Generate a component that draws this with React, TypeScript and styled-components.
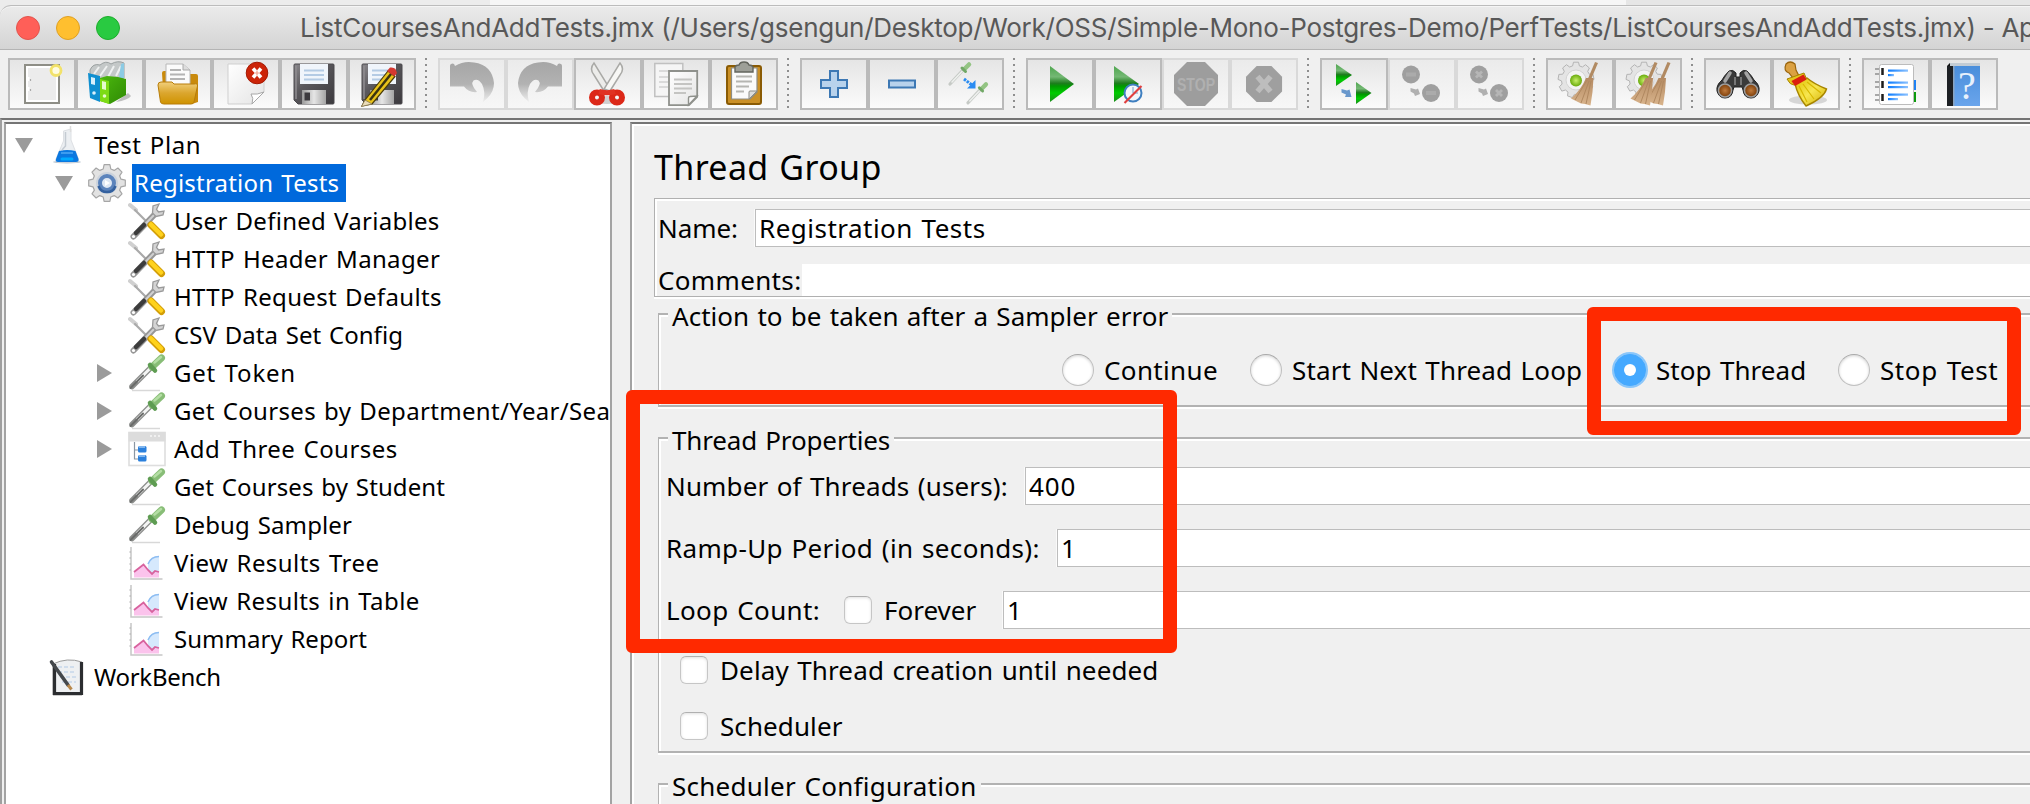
import React from 'react';
import styled, { createGlobalStyle, css } from 'styled-components';

const GlobalStyle = createGlobalStyle`
  * { box-sizing: border-box; }
  body { margin: 0; background: #f0f0f0; overflow: hidden; }
`;

/* ---------- window chrome ---------- */

const Window = styled.div`
  position: relative;
  display: flex;
  flex-direction: column;
  width: 2030px;
  height: 804px;
  overflow: hidden;
  background: #f0f0f0;
  color: #000;
  font-family: 'Noto Sans', 'Open Sans', sans-serif;
  font-size: 26px;
  word-spacing: 1.5px;
  white-space: nowrap;
`;

const TitleBar = styled.div`
  display: flex;
  flex: none;
  align-items: center;
  height: 45px;
  padding-left: 16px;
  border-top: 1px solid #bcbcbc;
  border-bottom: 1px solid #b4b4b4;
  border-top-left-radius: 11px;
  background: linear-gradient(#ebebeb, #d4d4d4);
  box-shadow: inset 0 1px 0 #f5f5f5;
`;

const Backdrop = styled.div`
  flex: none;
  padding-top: 5px;
  background: linear-gradient(90deg, #ececec 490px, #f6f6f6 490px, #f6f6f6 1626px, #e6e6e6 1626px);
`;

const Light = styled.span<{ $fill: string; $edge: string }>`
  flex: none;
  width: 24px;
  height: 24px;
  margin-right: 16px;
  border: 1px solid ${(p) => p.$edge};
  border-radius: 50%;
  background: ${(p) => p.$fill};
`;

const WindowTitle = styled.span`
  flex: none;
  margin-left: 164px;
  font-family: Inter, sans-serif;
  font-size: 26px;
  letter-spacing: -0.26px;
  word-spacing: 0;
  color: #585858;
  line-height: 40px;
`;

/* ---------- toolbar ---------- */

const Toolbar = styled.div`
  display: flex;
  flex: none;
  height: 68px;
  padding: 8px;
`;

const ToolButton = styled.div<{ $disabled?: boolean }>`
  display: flex;
  align-items: center;
  justify-content: center;
  width: 68px;
  height: 52px;
  border: 2px solid ${(p) => (p.$disabled ? '#d9d9d9' : '#bababa')};
  background: linear-gradient(#e5e5e5, #fbfbfb);
  ${(p) =>
    p.$disabled &&
    css`
      background: linear-gradient(#ebebeb, #f7f7f7);
    `}
`;

const Separator = styled.div`
  width: 2px;
  height: 50px;
  margin: 0 11px 0 9px;
  background: repeating-linear-gradient(#8e8e8e 0 2px, transparent 2px 6px);
`;

/* ---------- split panes ---------- */

const Split = styled.div`
  display: flex;
  flex: 1;
  min-height: 0;
  padding: 2px 0 0 2px;
  border-top: 2px solid #747474;
  border-left: 2px solid #9f9f9f;
`;

const TreePane = styled.div`
  flex: none;
  width: 608px;
  padding-top: 2px;
  overflow: hidden;
  border: 2px solid #a3a3a3;
  border-top-color: #757575;
  border-bottom: 0;
  background: #fff;
`;

const Divider = styled.div`
  flex: none;
  width: 18px;
`;

const FormPane = styled.div`
  flex: 1;
  min-width: 0;
  overflow: hidden;
  padding: 21px 0 0 22px;
  border-left: 2px solid #a3a3a3;
  border-top: 2px solid #757575;
  box-shadow: inset 2px 2px 0 #fff;
`;

/* ---------- tree ---------- */

const TreeRow = styled.div<{ $level: number }>`
  display: flex;
  align-items: center;
  height: 38px;
  padding-left: ${(p) => 9 + p.$level * 40}px;
  font-size: 24px;
`;

const Toggle = styled.span`
  display: flex;
  flex: none;
  justify-content: center;
  width: 18px;
  margin-right: 15px;
`;

const TreeLabel = styled.span<{ $selected?: boolean; $track: number }>`
  margin-left: 6px;
  padding: 0 ${(p) => (p.$selected ? 7 : 0)}px 0 2px;
  line-height: 38px;
  letter-spacing: ${(p) => p.$track}px;
  ${(p) =>
    p.$selected &&
    css`
      background: #0069dc;
      color: #fff;
    `}
`;

/* ---------- form ---------- */

const Heading = styled.h1<{ $track: number }>`
  margin: 0;
  font-size: 34px;
  font-weight: 400;
  line-height: 44px;
  letter-spacing: ${(p) => p.$track}px;
`;

const NamePanel = styled.div`
  display: flex;
  flex-direction: column;
  gap: 17px;
  margin-top: 9px;
  margin-right: -12px;
  padding: 10px 0 0 3px;
  border: 1px solid #b0b0b0;
  box-shadow: inset 2px 2px 0 #fff, 0 2px 0 #fff;
`;

const Group = styled.section<{ $gap: number; $bottom: number }>`
  margin: ${(p) => p.$gap}px -12px 0 4px;
  padding-bottom: ${(p) => p.$bottom}px;
  border: solid #b2b2b2;
  border-width: 2px 1px 2px 1px;
  box-shadow: inset 2px 2px 0 #fff, 0 2px 0 #fff;
`;

const Legend = styled.h2<{ $track: number }>`
  width: max-content;
  margin: -15px 0 0 9px;
  padding: 0 4px 0 4px;
  background: #f0f0f0;
  font-size: 26px;
  font-weight: 400;
  line-height: 32px;
  letter-spacing: ${(p) => p.$track}px;
`;

const Row = styled.div<{ $height?: number; $top?: number; $indent?: number }>`
  display: flex;
  align-items: center;
  height: ${(p) => p.$height ?? 38}px;
  margin-top: ${(p) => p.$top ?? 0}px;
  padding-left: ${(p) => p.$indent ?? 0}px;
`;

const Label = styled.label<{ $width?: number; $track: number; $inset?: number }>`
  flex: none;
  width: ${(p) => (p.$width ? `${p.$width}px` : 'auto')};
  padding-left: ${(p) => p.$inset ?? 0}px;
  line-height: 38px;
  letter-spacing: ${(p) => p.$track}px;
`;

const Field = styled.div<{ $bare?: boolean; $track?: number }>`
  flex: 1;
  align-self: stretch;
  padding-left: 3px;
  border: ${(p) => (p.$bare ? '0' : '1px solid #bdbdbd')};
  background: #fff;
  box-shadow: ${(p) => (p.$bare ? 'none' : '-1px 0 0 #fafafa')};
  line-height: 37px;
  letter-spacing: ${(p) => p.$track ?? 0}px;
`;

const Option = styled.div<{ $width: number }>`
  display: flex;
  flex: none;
  align-items: center;
  gap: 10px;
  width: ${(p) => p.$width}px;
`;

const Radio = styled.span<{ $checked?: boolean }>`
  display: flex;
  flex: none;
  align-items: center;
  justify-content: center;
  width: 32px;
  height: 32px;
  border: 1px solid #c0c0c0;
  border-top-color: #a9a9a9;
  border-radius: 50%;
  background: #fff;
  box-shadow: inset 0 1px 3px rgba(0, 0, 0, 0.18);
  ${(p) =>
    p.$checked &&
    css`
      border-color: #45a9ff;
      background: #45a9ff;
      box-shadow: 0 0 0 2px #8ac6fa;
      &::after {
        content: '';
        width: 12px;
        height: 12px;
        border-radius: 50%;
        background: #fff;
      }
    `}
`;

const CheckBox = styled.span`
  flex: none;
  width: 28px;
  height: 28px;
  border: 1px solid #c6c6c6;
  border-top-color: #b0b0b0;
  border-radius: 6px;
  background: #fff;
  box-shadow: inset 0 1px 3px rgba(0, 0, 0, 0.12);
`;

const Callout = styled.div<{ $x: number; $y: number; $w: number; $h: number }>`
  position: absolute;
  left: ${(p) => p.$x}px;
  top: ${(p) => p.$y}px;
  width: ${(p) => p.$w}px;
  height: ${(p) => p.$h}px;
  border: 14px solid #ff2900;
  border-radius: 6px;
`;

/* ---------- icon drawing ---------- */

const gearPath = (cx: number, cy: number, outer: number, inner: number, teeth: number) => {
  const pts: string[] = [];
  const step = (Math.PI * 2) / teeth;
  for (let i = 0; i < teeth; i += 1) {
    const a = i * step - Math.PI / 2;
    [
      [-0.34, inner],
      [-0.2, outer],
      [0.2, outer],
      [0.34, inner],
    ].forEach(([o, r]) => {
      pts.push(`${(cx + Math.cos(a + o * step) * r).toFixed(1)} ${(cy + Math.sin(a + o * step) * r).toFixed(1)}`);
    });
  }
  return `M${pts.join('L')}Z`;
};

const OCTAGON = 'M13 0H31L44 13V31L31 44H13L0 31V13Z';

const Gradients = () => (
  <svg width="0" height="0" style={{ display: 'block' }}>
    <defs>
      <linearGradient id="green" x1="0" y1="0" x2="0" y2="1">
        <stop offset="0" stopColor="#4fa64f" />
        <stop offset=".3" stopColor="#74b874" />
        <stop offset=".48" stopColor="#1e7c1e" />
        <stop offset=".56" stopColor="#009a00" />
        <stop offset=".75" stopColor="#00cc00" />
        <stop offset="1" stopColor="#1d8c1d" />
      </linearGradient>
      <linearGradient id="folder" x1="0" y1="0" x2="0" y2="1">
        <stop offset="0" stopColor="#f1cf7c" />
        <stop offset=".5" stopColor="#dba62e" />
        <stop offset="1" stopColor="#cf9300" />
      </linearGradient>
      <linearGradient id="metal" x1="0" y1="0" x2="1" y2="1">
        <stop offset="0" stopColor="#8a888c" />
        <stop offset=".4" stopColor="#5a585c" />
        <stop offset="1" stopColor="#3c3a3e" />
      </linearGradient>
      <linearGradient id="shutter" x1="0" y1="0" x2="1" y2="0">
        <stop offset="0" stopColor="#9a9a9a" />
        <stop offset=".5" stopColor="#e6e6e6" />
        <stop offset="1" stopColor="#a4a4a4" />
      </linearGradient>
      <linearGradient id="paper" x1="0" y1="0" x2="1" y2="1">
        <stop offset="0" stopColor="#ffffff" />
        <stop offset="1" stopColor="#e4e4e4" />
      </linearGradient>
      <linearGradient id="undo" x1="0" y1="0" x2="0" y2="1">
        <stop offset="0" stopColor="#a6a6a6" />
        <stop offset=".55" stopColor="#b2b2b2" />
        <stop offset="1" stopColor="#eeeeee" />
      </linearGradient>
      <linearGradient id="book" x1="0" y1="0" x2="0" y2="1">
        <stop offset="0" stopColor="#4a8edb" />
        <stop offset="1" stopColor="#6aa5ec" />
      </linearGradient>
      <linearGradient id="bluebar" x1="0" y1="0" x2="1" y2="0">
        <stop offset="0" stopColor="#0a7bff" />
        <stop offset="1" stopColor="#8cc2ff" />
      </linearGradient>
      <radialGradient id="ball">
        <stop offset="0" stopColor="#c8f06a" />
        <stop offset="1" stopColor="#69ab0c" />
      </radialGradient>
      <radialGradient id="lens">
        <stop offset="0" stopColor="#c07a3c" />
        <stop offset="1" stopColor="#7a3c08" />
      </radialGradient>
      <linearGradient id="straw" x1="0" y1="0" x2="0" y2="1">
        <stop offset="0" stopColor="#b48a62" />
        <stop offset="1" stopColor="#d9b48c" />
      </linearGradient>
      <linearGradient id="brush" x1="0" y1="0" x2="1" y2="1">
        <stop offset="0" stopColor="#e0c000" />
        <stop offset=".5" stopColor="#f7e650" />
        <stop offset="1" stopColor="#d0ac00" />
      </linearGradient>
      <linearGradient id="leaf" x1="0" y1="0" x2="1" y2="1">
        <stop offset="0" stopColor="#4cb80e" />
        <stop offset="1" stopColor="#2f8a04" />
      </linearGradient>
    </defs>
  </svg>
);

const Floppy = () => (
  <g>
    <path d="M3 2H41Q42 2 42 3V41Q42 42 41 42H6L2 38V3Q2 2 3 2Z" fill="url(#metal)" stroke="#4a484c" strokeWidth="1" />
    <path d="M4 4V37" stroke="#8f8d91" strokeWidth="1.5" />
    <rect x="8" y="2" width="28" height="20" fill="#f0f5fb" />
    <path d="M12 8.5H32M12 13H32M12 17.5H32" stroke="#b4cbe4" strokeWidth="2" />
    <rect x="10" y="28" width="24" height="14" fill="url(#shutter)" />
    <rect x="12.500" y="30.500" width="5.500" height="8" fill="#3c3a3e" />
  </g>
);

const Pipette = () => (
  <g>
    <path d="M4 32.500L22 14.500" stroke="#8b8d8b" strokeWidth="5.500" strokeLinecap="round" />
    <path d="M9 27.500L22 14.500" stroke="#f4f5f4" strokeWidth="3" />
    <path d="M2.500 34L15 21.500" stroke="#6a6c6a" strokeWidth="2" strokeLinecap="round" />
    <path d="M24 13L33.500 4" stroke="#88bd77" strokeWidth="7" strokeLinecap="round" />
    <path d="M26.500 8.500L33 3" stroke="#b4dea4" strokeWidth="2.500" strokeLinecap="round" />
    <path d="M22 11L27 16.500" stroke="#5e9c52" strokeWidth="4.500" strokeLinecap="round" />
  </g>
);

const SmallPipette = () => (
  <g strokeLinecap="round">
    <path d="M2 22L15 8" stroke="#c6cac6" strokeWidth="3.200" />
    <path d="M4 20L14 9.500" stroke="#eef0ee" strokeWidth="1.500" />
    <path d="M16.500 7L21 2.500" stroke="#93c483" strokeWidth="4.500" />
    <path d="M14 6L17.500 9.500" stroke="#71a866" strokeWidth="3" />
  </g>
);

const CrossedTools = () => (
  <g strokeLinecap="round">
    <path d="M2 3L8 8" stroke="#d0d0d0" strokeWidth="4" />
    <path d="M7 8L20 21" stroke="#aaaaaa" strokeWidth="2.200" />
    <path d="M5.500 34.500L28 11" stroke="#969696" strokeWidth="6" />
    <path d="M14 25.500L27 12" stroke="#d0d0d0" strokeWidth="2" />
    <path d="M8 31L16 23" stroke="#3c3c3c" strokeWidth="4.500" />
    <circle cx="5.500" cy="34.500" r="1.600" fill="#fff" />
    <path d="M25 4L24.500 11L28 14.500L35 13L36 9L30.500 10L28.500 7.500L31 2Z" fill="#d4d4d4" stroke="#9a9a9a" strokeWidth="1.300" />
    <path d="M23 23L33.500 33.500" stroke="#d39e08" strokeWidth="7" />
    <path d="M23 22.500L33 32.500" stroke="#ffd21c" strokeWidth="4.500" />
  </g>
);

const Straw = ({ dx = 0 }: { dx?: number }) => (
  <g transform={`translate(${dx} 0)`}>
    <path d="M38.500 0.500L31.500 17" stroke="#b18a62" strokeWidth="3.200" />
    <path d="M28 16H35.500Q35 30 32.500 43.500L27 42L23 41.500L18 39L13 36.500Q23 28 28 16Z" fill="url(#straw)" />
    <path d="M29 18L17 38M31 19L23 41M33 19L28 42" stroke="#b08860" strokeWidth="1" fill="none" />
  </g>
);

const PaleGear = () => (
  <g>
    <path d={gearPath(18, 18, 18, 14.5, 9)} fill="#e4e4e4" stroke="#b4b4b4" strokeWidth="1" />
    <circle cx="18" cy="18" r="10" fill="#f3f3f3" stroke="#d4d4d4" />
    <circle cx="18" cy="18.500" r="6" fill="url(#ball)" />
  </g>
);

const Hook = () => (
  <path
    d="M1 2Q4 .500 5 4Q14 -1.500 24 .500Q42 3 44 21Q44 30 37 36.500L33 40Q36 30 32 22Q28 16 23.500 18.500Q20 22 27 30Q19 31 14 24.500H0V4Q0 2.500 1 2Z"
    fill="url(#undo)"
  />
);

const icons: Record<string, React.ReactNode> = {
  new: (
    <g>
      <rect x="5" y="3" width="34" height="38" fill="#fff" stroke="#8e8e86" strokeWidth="2" />
      <rect x="8" y="6" width="28" height="32" fill="#ececec" />
      <path d="M8 15V19M8 25V29" stroke="#fff" strokeWidth="3" />
      <path d="M10.500 17V19M10.500 27V29" stroke="#aaa" strokeWidth="1.200" />
      <circle cx="36" cy="8.500" r="5" fill="#fffce0" stroke="#f2e26a" strokeWidth="2.800" />
    </g>
  ),
  templates: (
    <g>
      <path d="M40 31L43 34Q40 38 28 40Z" fill="#999" opacity=".6" />
      <path d="M2 8Q5 1 12 3Q18 -2 23 2Q30 -2 36 1V16L14 20L2 14Z" fill="#c4c8c8" stroke="#9aa0a0" strokeWidth="1" />
      <path d="M6 12L11 5M12 14L19 4M20 15L26 4M28 14L33 4" stroke="#eef0f0" strokeWidth="2" />
      <path d="M33 2L36 1V16L31 16Z" fill="#8ccbe4" />
      <path d="M0 11L12 14V40L2 36Z" fill="#0f8fd0" />
      <path d="M3 15L7 16V23L3 22Z" fill="#d8f0fb" />
      <circle cx="6" cy="31" r="1.800" fill="#d8f0fb" />
      <path d="M12 16L19 14L30 15L38 17V33L22 42L12 39Z" fill="url(#leaf)" />
      <path d="M12 17L21 19V42L12 39Z" fill="#7ddb15" />
      <path d="M14 19L18 20V28L14 27Z" fill="#e6fbcd" />
      <circle cx="16.500" cy="34" r="1.800" fill="#e6fbcd" />
    </g>
  ),
  open: (
    <g>
      <path d="M6 11Q6 9 8 9H18L20 12H40Q42 12 42 14V40L36 42H8Z" fill="#c98a0c" />
      <path d="M10 2H27L34 8V24H10Z" fill="#fbfbfb" stroke="#b8b8b8" />
      <path d="M27 2V8H34" fill="#ddd" stroke="#aaa" />
      <path d="M14 8H25M14 12.500H29M14 17H29" stroke="#b4b4b4" strokeWidth="1.800" />
      <path d="M2 23Q2 20 5 20H16L18 22H38Q42 21 41.500 24L38 40Q37.500 42 35 42H8Q5 42 4.500 40Z" fill="url(#folder)" stroke="#b87d0a" />
    </g>
  ),
  close: (
    <g>
      <path d="M4 2H40V30L28 42H4Z" fill="url(#paper)" stroke="#cfcfcf" />
      <path d="M40 30L28 42Q30 36 27 32Q33 33 40 30Z" fill="#fff" stroke="#a8a8a8" />
      <circle cx="33" cy="11" r="10.800" fill="#cc2408" stroke="#a51a04" />
      <path d="M29 6.500L37 15.500M37 6.500L29 15.500" stroke="#fff" strokeWidth="3.600" />
      <path d="M33 8.500V13.500M30.500 11H35.500" stroke="#f2a08c" strokeWidth="1.200" />
    </g>
  ),
  save: <Floppy />,
  saveAs: (
    <g>
      <Floppy />
      <path d="M5 38L28 9L35 14.500L12 42L2 44Z" fill="#e9c21a" stroke="#4a3c08" strokeWidth="1.200" />
      <path d="M10 38L31 12" stroke="#3c3410" strokeWidth="2.500" />
      <path d="M5 38L12 42L1.500 44.500Z" fill="#eadcb8" stroke="#8c7a50" strokeWidth=".8" />
      <path d="M27 9L30 5.500Q34 5 35.500 7L37 11L34.500 14.500Z" fill="#d43830" />
    </g>
  ),
  undo: <Hook />,
  redo: (
    <g transform="translate(44 0) scale(-1 1)">
      <Hook />
    </g>
  ),
  cut: (
    <g fill="none">
      <ellipse cx="21" cy="38" rx="10" ry="4" fill="#cfcfcf" />
      <path d="M8 1Q3 7 8 13L18 29L24 27Z" fill="#ececea" stroke="#a9a9a6" strokeWidth="1.500" />
      <path d="M34 1Q39 7 34 13L24 29L18 27Z" fill="#f7f7f5" stroke="#a9a9a6" strokeWidth="1.500" />
      <circle cx="11" cy="35.500" r="5" stroke="#dc2818" strokeWidth="6" />
      <circle cx="31" cy="35.500" r="5" stroke="#dc2818" strokeWidth="6" />
      <path d="M13 29.500Q21 32 29 29.500" stroke="#e03222" strokeWidth="5" />
    </g>
  ),
  copy: (
    <g>
      <rect x=".8" y="1.500" width="28" height="33" fill="#f5f5f5" stroke="#c0c0c0" strokeWidth="1.500" />
      <path d="M5 9H24M5 15H14M5 20H14M5 25H14" stroke="#dadada" strokeWidth="1.800" />
      <path d="M15 9H43.200V35L35 43.200H15Z" fill="url(#paper)" stroke="#8f918c" strokeWidth="1.800" />
      <path d="M43 34L34.500 43V36Q34.500 34.500 36 34.500Z" fill="#fafafa" stroke="#8f918c" strokeWidth="1.400" />
      <path d="M20 17.500H38M20 22H38M20 26.500H38M20 31H32" stroke="#c4c4c2" strokeWidth="1.800" />
    </g>
  ),
  paste: (
    <g>
      <rect x="5" y="4" width="34" height="38" rx="2" fill="#cb9026" stroke="#8a5b04" strokeWidth="2" />
      <path d="M9.500 6H35V30L28 37H9.500Z" fill="#fafafa" stroke="#8d8d86" strokeWidth="1.200" />
      <path d="M35 29L27 37V30Q27 29 28 29Z" fill="#ddd" stroke="#8d8d86" />
      <path d="M14 14.500H30M14 19.500H30M14 24.500H27M14 29.500H22" stroke="#b6b6b2" strokeWidth="1.800" />
      <path d="M13 10V5Q14 3 17 3Q18 0 22 0T27 3Q30 3 31 5V10Z" fill="#9d9f98" stroke="#63655e" strokeWidth="1.400" />
    </g>
  ),
  expand: <path d="M18 9H26V18H35V26H26V35H18V26H9V18H18Z" fill="#b8d2ec" stroke="#3d78b4" strokeWidth="2" />,
  collapse: <path d="M9 18.500H35V25.500H9Z" fill="#b8d2ec" stroke="#3d78b4" strokeWidth="2" />,
  toggle: (
    <g>
      <SmallPipette />
      <g transform="translate(18 20) scale(.95)">
        <SmallPipette />
      </g>
      <path d="M16 17L24 23" stroke="#2a8cf2" strokeWidth="3" strokeDasharray="2.500 1" />
      <path d="M19 26.500H27.500V18Z" fill="#2a8cf2" />
    </g>
  ),
  play: <path d="M12 4L36 22L12 40Z" fill="url(#green)" />,
  playNoTimers: (
    <g>
      <path d="M8 4L33 22L8 40Z" fill="url(#green)" />
      <circle cx="27" cy="31" r="8.500" fill="#f2f6fa" stroke="#3f7fc0" strokeWidth="2" />
      <path d="M27 31V25M27 31H32" stroke="#9dbad8" strokeWidth="1.500" />
      <path d="M18.500 41L35.500 24" stroke="#e04040" strokeWidth="2.200" />
    </g>
  ),
  stop: (
    <g>
      <path d={OCTAGON} fill="#9d9d9d" />
      <text x="22" y="28.500" textAnchor="middle" fontFamily="Liberation Sans, sans-serif" fontWeight="700" fontSize="18" textLength="38" lengthAdjust="spacingAndGlyphs" fill="#b0b0b0">
        STOP
      </text>
    </g>
  ),
  shutdown: (
    <g>
      <path d={OCTAGON} fill="#9f9f9f" transform="translate(4 4) scale(.82)" />
      <path d="M15.500 14.500L28.500 29.500M28.500 14.500L15.500 29.500" stroke="#bdbdbd" strokeWidth="5.500" />
    </g>
  ),
  remoteStart: (
    <g>
      <path d="M4 2L20 13L4 24Z" fill="url(#green)" />
      <path d="M24 20L39.500 31L24 42Z" fill="url(#green)" />
      <path d="M9.500 27L15 28.500L17.500 27.500L19.500 35L13 35L14 32.500L9.500 30.500Z" fill="#6a98cc" />
    </g>
  ),
  remoteStop: (
    <g>
      <circle cx="11" cy="12.500" r="9" fill="#9f9f9f" />
      <circle cx="31" cy="31" r="9" fill="#9f9f9f" />
      <path d="M6 12.500H16M26 31H36" stroke="#ababab" strokeWidth="4" />
      <path d="M10.500 26L16 27.500L18 26.500L20 32L15 34L14 31.500L10.500 29.500Z" fill="#b0b0b0" />
    </g>
  ),
  remoteShutdown: (
    <g>
      <circle cx="11" cy="12.500" r="9" fill="#9f9f9f" />
      <circle cx="31" cy="31" r="9" fill="#9f9f9f" />
      <path d="M8 9.500L14 15.500M14 9.500L8 15.500M28 28L34 34M34 28L28 34" stroke="#b6b6b6" strokeWidth="2.800" />
      <path d="M10.500 26L16 27.500L18 26.500L20 32L15 34L14 31.500L10.500 29.500Z" fill="#b0b0b0" />
    </g>
  ),
  clear: (
    <g>
      <PaleGear />
      <Straw />
    </g>
  ),
  clearAll: (
    <g>
      <PaleGear />
      <Straw dx={4.5} />
      <Straw dx={-8.5} />
    </g>
  ),
  search: (
    <g>
      <path d="M13 9Q17 7 20 11V15H24V11Q27 7 31 9Q36 14 38 18Q44 23 43 29Q41 36 35 36Q28 36 27 28L26 25H18L17 28Q16 36 9 36Q3 36 1 29Q0 23 6 18Q8 14 13 9Z" fill="#3a3a3a" stroke="#222" />
      <path d="M9 19L14 11M35 19L30 11" stroke="#a4a4a4" strokeWidth="3.500" strokeLinecap="round" />
      <path d="M19 15V23M25 15V23" stroke="#8a8a8a" strokeWidth="1.500" />
      <circle cx="9" cy="28.500" r="6.500" fill="url(#lens)" stroke="#9d9d9d" strokeWidth="1.500" />
      <circle cx="35" cy="28.500" r="6.500" fill="url(#lens)" stroke="#9d9d9d" strokeWidth="1.500" />
    </g>
  ),
  broom: (
    <g>
      <ellipse cx="24" cy="38" rx="19" ry="4.500" fill="#d6d6d6" />
      <path d="M2 2Q6 -2 11 2L12 8L15 14L9 16L5 11Q-1 9 2 2Z" fill="#dba142" stroke="#9a640c" strokeWidth="1.200" />
      <path d="M3 17L20 11L23 18L10 23Q6 23 3 17Z" fill="#e4c51c" stroke="#a88600" />
      <path d="M11 22L23 16Q30 22 42.500 27Q40 36 22 44Q14 34 11 22Z" fill="url(#brush)" stroke="#a88600" strokeWidth="1.400" />
      <path d="M15 24L23 40M19 22L30 37M23 20L37 31" stroke="#d8b800" strokeWidth="1.200" />
      <path d="M7.500 19L19.500 12.500L22.500 17.500L11 24Z" fill="#dc1f10" />
    </g>
  ),
  functions: (
    <g>
      <rect x="38" y="18" width="4" height="10" fill="#1f82f4" />
      <rect x="38" y="30" width="4" height="10" fill="#0c9a0c" />
      <rect x="5.500" y="2.500" width="34" height="40" rx="2" fill="#fff" stroke="#bcbcbc" />
      <path d="M8.500 6V13M8.500 19V26M8.500 32V39" stroke="#1c1c1c" strokeWidth="2.500" />
      <path d="M1 7H5M1 12H5M1 20H5M1 25H5M1 33H5M1 38H5" stroke="#8f8f8f" strokeWidth="1.500" />
      <g fill="url(#bluebar)">
        <rect x="14" y="7.500" width="20" height="2.200" />
        <rect x="14" y="12" width="6" height="2.200" />
        <rect x="14" y="19.500" width="20" height="2.200" />
        <rect x="14" y="24" width="20" height="2.200" />
        <rect x="14" y="31.500" width="20" height="2.200" />
        <rect x="14" y="36" width="10" height="2.200" />
      </g>
    </g>
  ),
  help: (
    <g>
      <path d="M7 1H38V5H5Z" fill="#c3ccd4" />
      <path d="M5 4L8 1V44H5Z" fill="#111" />
      <rect x="5" y="4" width="33" height="40" fill="url(#book)" />
      <rect x="5" y="4" width="7" height="40" fill="#1d2024" />
      <rect x="11" y="4" width="1.500" height="40" fill="#8aa4c0" />
      <text x="25" y="37" textAnchor="middle" fontFamily="Liberation Serif, serif" fontSize="40" fill="#e8f1fc">
        ?
      </text>
    </g>
  ),
};

const treeIcons: Record<string, React.ReactNode> = {
  flask: (
    <g>
      <ellipse cx="19" cy="36" rx="14" ry="1.500" fill="#b8c4d0" />
      <path d="M15.500 5L23 3V14L30.500 33Q31 36 28 36H10Q7 36 8 33L15.500 15Z" fill="#eceff2" stroke="#dde0e4" strokeWidth="1" />
      <path d="M11 25Q19 23 27.500 25L30.500 33Q31 36 28 36H10Q7 36 8 33Z" fill="#0b78e0" />
      <path d="M14 33H24" stroke="#0af" strokeWidth="3" strokeLinecap="round" />
      <path d="M13 27H25" stroke="#3c9cf0" strokeWidth="2" />
      <path d="M17.500 6V20L14 24" fill="none" stroke="#c4cbd2" strokeWidth="1.500" />
      <path d="M22.500 0V6" stroke="#ddd" strokeWidth="1.500" />
    </g>
  ),
  gear: (
    <g>
      <path d={gearPath(19, 19, 18.5, 14.5, 8)} fill="#e2e2e2" stroke="#a6a6a6" strokeWidth="1.200" strokeLinejoin="round" />
      <circle cx="19" cy="19" r="11" fill="#ccd3dc" />
      <circle cx="19" cy="19" r="7" fill="#dfe8f3" stroke="#5c84bc" strokeWidth="4" />
      <path d="M10.500 22A9 9 0 0 0 27.500 22" fill="none" stroke="#34619f" strokeWidth="2.500" />
      <path d="M17 16L22 19L17 22Z" fill="#fff" />
    </g>
  ),
  tools: <CrossedTools />,
  pipette: (
    <g>
      <path d="M4 36.500H32" stroke="#d8d8d8" strokeWidth="1.500" />
      <Pipette />
    </g>
  ),
  controller: (
    <g>
      <rect x="1" y="2.500" width="36" height="33" fill="#fff" stroke="#dedede" strokeWidth="1.600" />
      <rect x=".5" y="2" width="37" height="9.500" fill="#dcdcdc" />
      <path d="M22 6H34" stroke="#f0f0f0" strokeWidth="2" strokeDasharray="2 2" />
      <path d="M6.500 12V29H10M6.500 20H10" fill="none" stroke="#8a96a2" strokeWidth="1.200" />
      <rect x="10" y="16" width="8.500" height="6.500" rx="1.500" fill="#2b80dc" />
      <rect x="10" y="25" width="8.500" height="6.500" rx="1.500" fill="#2b80dc" />
      <path d="M11 17H17M11 26H17" stroke="#9cc6f4" strokeWidth="1.500" />
    </g>
  ),
  chart: (
    <g fill="none">
      <path d="M20 30V19Q23 12 31 12V32H20Z" fill="#d6e9fd" />
      <path d="M20 20Q23 12.500 31 12.500" stroke="#8dbdf2" strokeWidth="1.500" />
      <path d="M6 28L15.500 20.500L20 26L24 30L31 27V33.500H6Z" fill="#fbc3ec" />
      <path d="M6 28L15.500 20.500L20 26L24 30L27 27L31 28" stroke="#d8629e" strokeWidth="1.800" />
      <path d="M3 3V35H34.500" stroke="#c6c6c6" strokeWidth="1.500" />
      <path d="M1.500 8H3M1.500 14H3M1.500 20H3M1.500 26H3" stroke="#bbb" strokeWidth="1.500" />
    </g>
  ),
  notebook: (
    <g>
      <path d="M5 6Q19 -1 34 4V37H5Z" fill="#eef0f2" stroke="#9a9a9a" />
      <path d="M6.500 6V35.500H33.500V4" fill="none" stroke="#2b2d30" strokeWidth="3.200" />
      <path d="M10 9H28M10 14H28M12 19H28M14 24H28" stroke="#c6d6ea" strokeWidth="1.400" strokeDasharray="4 2" />
      <path d="M3.500 4L20 27" stroke="#44484c" strokeWidth="3.600" strokeLinecap="round" />
      <path d="M20 27L23.500 31.500" stroke="#b8884c" strokeWidth="3" />
    </g>
  ),
};

const ToolIcon = ({ name }: { name: string }) => (
  <svg width="44" height="44" viewBox="0 0 44 44" overflow="visible">
    {icons[name]}
  </svg>
);

const TreeSvg = styled.svg`
  flex: none;
`;

const TreeIcon = ({ name }: { name: string }) => (
  <TreeSvg width="38" height="38" viewBox="0 0 38 38">
    {treeIcons[name]}
  </TreeSvg>
);

const Arrow = ({ open }: { open: boolean }) =>
  open ? (
    <svg width="18" height="15" viewBox="0 0 18 15">
      <path d="M0 0H18L9 15Z" fill="#9b9b9b" />
    </svg>
  ) : (
    <svg width="15" height="18" viewBox="0 0 15 18">
      <path d="M0 0V18L15 9Z" fill="#9b9b9b" />
    </svg>
  );

/* ---------- data ---------- */

const toolGroups: [string, boolean?][][] = [
  [['new'], ['templates'], ['open'], ['close'], ['save'], ['saveAs']],
  [['undo', true], ['redo', true], ['cut'], ['copy'], ['paste']],
  [['expand'], ['collapse'], ['toggle']],
  [['play'], ['playNoTimers'], ['stop', true], ['shutdown', true]],
  [['remoteStart'], ['remoteStop', true], ['remoteShutdown', true]],
  [['clear'], ['clearAll']],
  [['search'], ['broom']],
  [['functions'], ['help']],
];

interface Node {
  text: string;
  icon: string;
  level: number;
  track: number;
  open?: boolean;
  selected?: boolean;
}

const nodes: Node[] = [
  { text: 'Test Plan', icon: 'flask', level: 0, track: 0.55, open: true },
  { text: 'Registration Tests', icon: 'gear', level: 1, track: 0.22, open: true, selected: true },
  { text: 'User Defined Variables', icon: 'tools', level: 2, track: 0.27 },
  { text: 'HTTP Header Manager', icon: 'tools', level: 2, track: 0.34 },
  { text: 'HTTP Request Defaults', icon: 'tools', level: 2, track: 0.34 },
  { text: 'CSV Data Set Config', icon: 'tools', level: 2, track: 0.04 },
  { text: 'Get Token', icon: 'pipette', level: 2, track: 0.8, open: false },
  { text: 'Get Courses by Department/Year/Sea', icon: 'pipette', level: 2, track: 0.33, open: false },
  { text: 'Add Three Courses', icon: 'controller', level: 2, track: 0.45, open: false },
  { text: 'Get Courses by Student', icon: 'pipette', level: 2, track: 0.1 },
  { text: 'Debug Sampler', icon: 'pipette', level: 2, track: 0.1 },
  { text: 'View Results Tree', icon: 'chart', level: 2, track: 0.45 },
  { text: 'View Results in Table', icon: 'chart', level: 2, track: 0.4 },
  { text: 'Summary Report', icon: 'chart', level: 2, track: 0.02 },
  { text: 'WorkBench', icon: 'notebook', level: 0, track: -0.3 },
];

export default function App() {
  return (
    <Window>
      <GlobalStyle />
      <Gradients />
      <Backdrop>
        <TitleBar>
          <Light $fill="#ff5f58" $edge="#e2544d" />
          <Light $fill="#ffbf2f" $edge="#dfa023" />
          <Light $fill="#29ca41" $edge="#1dad2c" />
          <WindowTitle>
            ListCoursesAndAddTests.jmx (/Users/gsengun/Desktop/Work/OSS/Simple-Mono-Postgres-Demo/PerfTests/ListCoursesAndAddTests.jmx) - Ap
          </WindowTitle>
        </TitleBar>
      </Backdrop>

      <Toolbar>
        {toolGroups.map((group, i) => (
          <React.Fragment key={i}>
            {i > 0 && <Separator />}
            {group.map(([name, disabled]) => (
              <ToolButton key={name} $disabled={disabled}>
                <ToolIcon name={name} />
              </ToolButton>
            ))}
          </React.Fragment>
        ))}
      </Toolbar>

      <Split>
        <TreePane>
          {nodes.map((n) => (
            <TreeRow key={n.text} $level={n.level}>
              <Toggle>{n.open !== undefined && <Arrow open={n.open} />}</Toggle>
              <TreeIcon name={n.icon} />
              <TreeLabel $selected={n.selected} $track={n.track}>
                {n.text}
              </TreeLabel>
            </TreeRow>
          ))}
        </TreePane>
        <Divider />
        <FormPane>
          <Heading $track={0.36}>Thread Group</Heading>

          <NamePanel>
            <Row>
              <Label $width={97} $track={-0.08}>Name:</Label>
              <Field $track={0.48}>Registration Tests</Field>
            </Row>
            <Row $height={32}>
              <Label $width={144} $track={0.35}>Comments:</Label>
              <Field $bare />
            </Row>
          </NamePanel>

          <Group $gap={16} $bottom={19}>
            <Legend $track={0.02}>Action to be taken after a Sampler error</Legend>
            <Row $height={32} $top={22} $indent={403}>
              <Option $width={188}>
                <Radio />
                <Label $track={0.36}>Continue</Label>
              </Option>
              <Option $width={364}>
                <Radio />
                <Label $track={0.13}>Start Next Thread Loop</Label>
              </Option>
              <Option $width={224}>
                <Radio $checked />
                <Label $track={0.05}>Stop Thread</Label>
              </Option>
              <Option $width={180}>
                <Radio />
                <Label $track={0.6}>Stop Test</Label>
              </Option>
            </Row>
          </Group>

          <Group $gap={30} $bottom={6}>
            <Legend $track={-0.14}>Thread Properties</Legend>
            <Row $top={11} $indent={7}>
              <Label $width={359} $track={0.13}>Number of Threads (users):</Label>
              <Field $track={0.9}>400</Field>
            </Row>
            <Row $top={24} $indent={7}>
              <Label $width={391} $track={0.35}>Ramp-Up Period (in seconds):</Label>
              <Field>1</Field>
            </Row>
            <Row $top={24} $indent={7}>
              <Label $width={178} $track={0.38}>Loop Count:</Label>
              <CheckBox />
              <Label $width={131} $track={0} $inset={12}>Forever</Label>
              <Field>1</Field>
            </Row>
            <Row $top={22} $indent={21}>
              <CheckBox />
              <Label $track={0.13} $inset={12}>Delay Thread creation until needed</Label>
            </Row>
            <Row $top={18} $indent={21}>
              <CheckBox />
              <Label $track={0.09} $inset={12}>Scheduler</Label>
            </Row>
          </Group>

          <Group $gap={30} $bottom={60}>
            <Legend $track={0.26}>Scheduler Configuration</Legend>
          </Group>
        </FormPane>
      </Split>

      <Callout $x={1587} $y={307} $w={434} $h={128} />
      <Callout $x={626} $y={390} $w={551} $h={263} />
    </Window>
  );
}
